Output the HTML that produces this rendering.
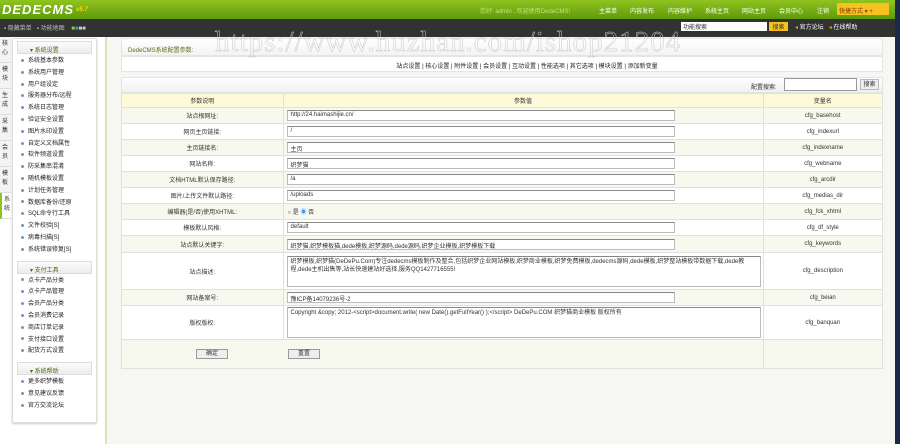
<!DOCTYPE html>
<html><head><meta charset="utf-8"><style>
*{margin:0;padding:0;box-sizing:border-box}
body{width:900px;height:444px;overflow:hidden;position:relative;background:#f6f7f2;font-family:"Liberation Sans","Noto Sans CJK SC",sans-serif;font-size:6px;color:#333}
.abs{position:absolute}
#top{left:0;top:0;width:895px;height:19px;background:linear-gradient(#8fc31f,#5f9a0c)}
#bar{left:0;top:19px;width:895px;height:18px;background:#323232}
#right{left:895px;top:0;width:5px;height:444px;background:#1c2a4a}
.logo{left:2px;top:2px;font:italic bold 13px "Liberation Sans",sans-serif;color:#fff;letter-spacing:1px}
.ver{left:76px;top:7px;color:#ffd800;font:italic bold 6px "Liberation Sans",sans-serif}
.tn{top:6px;color:#fff;font-size:6px;white-space:nowrap}
.quick{left:837px;top:3px;width:52px;height:12px;background:#f7c21f;color:#7a3b00;font-size:6px;padding:3px 2px}
#left{left:0;top:37px;width:107px;height:407px;background:#fff;border-right:2px solid #d7e3b6}
.tabs{left:0;top:37px;width:11px}
.tab{height:26px;width:11px;border-bottom:1px solid #ddd;font-size:6px;line-height:9px;padding:3px 0 0 2px;color:#333;background:#f3f3f3}
.menu{left:12px;top:38px;width:85px;height:385px;border:1px solid #ddd;background:#fff;border-radius:2px;box-shadow:0 1px 2px #ccc}
.mh{margin:2px 4px;height:13px;background:linear-gradient(#fbfbfb,#ececec);border:1px solid #ddd;color:#4a6a1a;padding:3px 0 0 12px;font-size:6px}
.mi{height:11.8px;line-height:11.8px;padding-left:8px;font-size:6px;color:#222;white-space:nowrap}
.mi:before{content:"";display:inline-block;width:3px;height:3px;border-radius:50%;background:#7a95b8;margin-right:4px;vertical-align:middle}
.box{left:121px;width:762px;background:#fff;border:1px solid #e5e5e5}
table{border-collapse:collapse;position:absolute;left:121px;top:93px;width:762px}
td{border:1px solid #e0e0e0;text-align:center;font-size:6px;padding:0}
tr:nth-child(even) td{background:#f8f9ee}
tr:nth-child(odd) td{background:#fff}
tr.h td{background:#fdf9d9;height:14px}
.in{display:block;width:388px;height:11px;border:1px solid #bbb;border-top-color:#888;text-align:left;padding:1px 3px;margin-left:3px;background:#fff;white-space:nowrap;overflow:hidden}
.ta{width:474px;height:31px;white-space:normal;line-height:8px}
.vl{text-align:left}
.btn{display:inline-block;width:32px;height:10px;border:1px solid #999;background:#eee;line-height:9px;text-align:center}
.wm{left:215px;top:26px;font:29px "Liberation Serif",serif;color:transparent;-webkit-text-stroke:0.5px #c8c8c8;white-space:nowrap;letter-spacing:1px}
</style></head><body>
<div id="top" class="abs"></div>
<div class="abs logo">DEDECMS</div><div class="abs ver">v5.7</div>
<div class="abs tn" style="left:480px;color:#c8e07a">您好: admin , 欢迎使用DedeCMS!</div>
<div class="abs tn" style="left:599px">主菜单</div>
<div class="abs tn" style="left:630px">内容发布</div>
<div class="abs tn" style="left:668px">内容维护</div>
<div class="abs tn" style="left:705px">系统主页</div>
<div class="abs tn" style="left:742px">网站主页</div>
<div class="abs tn" style="left:779px">会员中心</div>
<div class="abs tn" style="left:817px">注销</div>
<div class="abs quick">快捷方式 ▾ +</div>
<div id="bar" class="abs"></div>
<div class="abs" style="left:4px;top:23px;color:#bbb;font-size:6px">▪ 隐藏菜单 &nbsp; ▪ 功能地图 &nbsp;&nbsp; <span style="color:#9c3">■</span><span style="color:#39c">■</span><span style="color:#ccc">■■</span></div>
<div class="abs" style="left:681px;top:22px;width:86px;height:9px;background:#fff;font-size:6px;padding-left:2px">功能搜索</div>
<div class="abs" style="left:769px;top:22px;width:19px;height:9px;background:#f7c21f;font-size:6px;text-align:center">搜索</div>
<div class="abs" style="left:795px;top:22px;color:#fff;font-size:6px"><span style="color:#f90">◂</span> 官方论坛 &nbsp; <span style="color:#f90">◂</span> 在线帮助</div>
<div id="right" class="abs"></div>
<div id="left" class="abs"></div>
<div class="abs tabs">
<div class="tab">核<br>心</div><div class="tab">模<br>块</div><div class="tab">生<br>成</div><div class="tab">采<br>集</div><div class="tab">会<br>员</div><div class="tab">模<br>板</div><div class="tab" style="background:#fff;border-left:2px solid #8fc31f">系<br>统</div>
</div>
<div class="abs menu">
<div class="mh">▾ 系统设置</div>
<div class="mi">系统基本参数</div><div class="mi">系统用户管理</div><div class="mi">用户组设定</div><div class="mi">服务器分布/远程</div><div class="mi">系统日志管理</div><div class="mi">验证安全设置</div><div class="mi">图片水印设置</div><div class="mi">自定义文档属性</div><div class="mi">软件频道设置</div><div class="mi">防采集串混淆</div><div class="mi">随机模板设置</div><div class="mi">计划任务管理</div><div class="mi">数据库备份/还原</div><div class="mi">SQL命令行工具</div><div class="mi">文件校验[S]</div><div class="mi">病毒扫描[S]</div><div class="mi">系统错误修复[S]</div>
<div class="mh" style="margin-top:4px">▾ 支付工具</div>
<div class="mi">点卡产品分类</div><div class="mi">点卡产品管理</div><div class="mi">会员产品分类</div><div class="mi">会员消费记录</div><div class="mi">商店订单记录</div><div class="mi">支付接口设置</div><div class="mi">配货方式设置</div>
<div class="mh" style="margin-top:4px">▾ 系统帮助</div>
<div class="mi">更多织梦模板</div><div class="mi">意见建议反馈</div><div class="mi">官方交流论坛</div>
</div>
<div class="abs box" style="top:38px;height:18px;background:linear-gradient(#fff,#f3f3f3);color:#5a6a1a;padding:6px 6px;font-size:6px">DedeCMS系统配置参数:</div>
<div class="abs box" style="top:56px;height:16px;text-align:center;padding:4px 0 0 50px;font-size:6px;color:#222">站点设置 | 核心设置 | 附件设置 | 会员设置 | 互动设置 | 性能选项 | 其它选项 | 模块设置 | 添加新变量</div>
<div class="abs box" style="top:77px;height:16px;background:linear-gradient(#fff,#f0f0f0)"></div>
<div class="abs" style="left:751px;top:82px;font-size:6px">配置搜索:</div>
<div class="abs" style="left:784px;top:78px;width:73px;height:13px;border:1px solid #999;background:#fff"></div>
<div class="abs" style="left:860px;top:79px;width:19px;height:11px;border:1px solid #bbb;background:#eee;font-size:6px;text-align:center;line-height:10px">搜索</div>
<table>
<colgroup><col style="width:162px"><col style="width:480px"><col style="width:120px"></colgroup>
<tr class="h"><td>参数说明</td><td>参数值</td><td>变量名</td></tr>
<tr style="height:16px"><td>站点根网址:</td><td class="vl"><span class="in">http://24.haimashijie.cn/</span></td><td>cfg_basehost</td></tr>
<tr style="height:16px"><td>网页主页链接:</td><td class="vl"><span class="in">/</span></td><td>cfg_indexurl</td></tr>
<tr style="height:16px"><td>主页链接名:</td><td class="vl"><span class="in">主页</span></td><td>cfg_indexname</td></tr>
<tr style="height:16px"><td>网站名称:</td><td class="vl"><span class="in">织梦猫</span></td><td>cfg_webname</td></tr>
<tr style="height:16px"><td>文档HTML默认保存路径:</td><td class="vl"><span class="in">/a</span></td><td>cfg_arcdir</td></tr>
<tr style="height:16px"><td>图片/上传文件默认路径:</td><td class="vl"><span class="in">/uploads</span></td><td>cfg_medias_dir</td></tr>
<tr style="height:16px"><td>编辑器(是/否)使用XHTML:</td><td class="vl" style="padding-left:4px">○ 是 <span style="color:#39f">◉</span> 否</td><td>cfg_fck_xhtml</td></tr>
<tr style="height:16px"><td>模板默认风格:</td><td class="vl"><span class="in">default</span></td><td>cfg_df_style</td></tr>
<tr style="height:17px"><td>站点默认关键字:</td><td class="vl"><span class="in">织梦猫,织梦模板猫,dede模板,织梦源码,dede源码,织梦企业模板,织梦模板下载</span></td><td>cfg_keywords</td></tr>
<tr style="height:37px"><td>站点描述:</td><td class="vl"><span class="in ta">织梦模板,织梦猫(DeDePu.Com)专注dedecms模板制作及整合,包括织梦企业网站模板,织梦商业模板,织梦免费模板,dedecms源码,dede模板,织梦整站模板带数据下载,dede教程,dede主机出售等,站长快速建站好选择,服务QQ1427716555!</span></td><td>cfg_description</td></tr>
<tr style="height:16px"><td>网站备案号:</td><td class="vl"><span class="in">豫ICP备14079236号-2</span></td><td>cfg_beian</td></tr>
<tr style="height:34px"><td>版权版权:</td><td class="vl"><span class="in ta">Copyright &amp;copy; 2012-&lt;script&gt;document.write( new Date().getFullYear() );&lt;/script&gt; DeDePu.COM 织梦猫商业模板 版权所有</span></td><td>cfg_banquan</td></tr>
<tr style="height:29px"><td style="text-align:right;padding-right:55px;border-right:none"><span class="btn">确定</span></td><td class="vl" style="border-left:none;padding-left:5px"><span class="btn">重置</span></td><td></td></tr>
</table>
<div class="abs wm">https://www.huzhan.com/ishop21204</div>
</body></html>
